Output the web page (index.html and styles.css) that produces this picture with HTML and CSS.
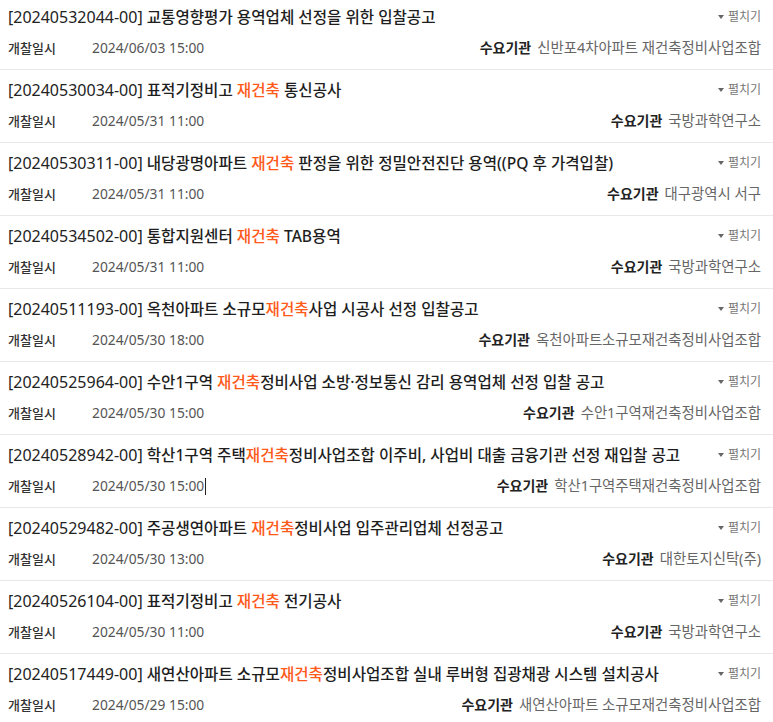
FILE: index.html
```html
<!DOCTYPE html>
<html lang="ko">
<head>
<meta charset="utf-8">
<link rel="stylesheet" href="styles.css">
</head>
<body>
<ul class="list">
  <li class="item">
    <div class="row">
      <p class="title"><span class="no">[20240532044-00]</span> 교통영향평가 용역업체 선정을 위한 입찰공고</p>
      <span class="toggle"><span class="tri"></span>펼치기</span>
    </div>
    <div class="row meta">
      <p class="date"><span class="label">개찰일시</span>2024/06/03 15:00</p>
      <p class="org"><span class="org-label">수요기관</span>신반포4차아파트 재건축정비사업조합</p>
    </div>
  </li>
  <li class="item">
    <div class="row">
      <p class="title"><span class="no">[20240530034-00]</span> 표적기정비고 <em class="hl">재건축</em> 통신공사</p>
      <span class="toggle"><span class="tri"></span>펼치기</span>
    </div>
    <div class="row meta">
      <p class="date"><span class="label">개찰일시</span>2024/05/31 11:00</p>
      <p class="org"><span class="org-label">수요기관</span>국방과학연구소</p>
    </div>
  </li>
  <li class="item">
    <div class="row">
      <p class="title"><span class="no">[20240530311-00]</span> 내당광명아파트 <em class="hl">재건축</em> 판정을 위한 정밀안전진단 용역((PQ 후 가격입찰)</p>
      <span class="toggle"><span class="tri"></span>펼치기</span>
    </div>
    <div class="row meta">
      <p class="date"><span class="label">개찰일시</span>2024/05/31 11:00</p>
      <p class="org"><span class="org-label">수요기관</span>대구광역시 서구</p>
    </div>
  </li>
  <li class="item">
    <div class="row">
      <p class="title"><span class="no">[20240534502-00]</span> 통합지원센터 <em class="hl">재건축</em> TAB용역</p>
      <span class="toggle"><span class="tri"></span>펼치기</span>
    </div>
    <div class="row meta">
      <p class="date"><span class="label">개찰일시</span>2024/05/31 11:00</p>
      <p class="org"><span class="org-label">수요기관</span>국방과학연구소</p>
    </div>
  </li>
  <li class="item">
    <div class="row">
      <p class="title"><span class="no">[20240511193-00]</span> 옥천아파트 소규모<em class="hl">재건축</em>사업 시공사 선정 입찰공고</p>
      <span class="toggle"><span class="tri"></span>펼치기</span>
    </div>
    <div class="row meta">
      <p class="date"><span class="label">개찰일시</span>2024/05/30 18:00</p>
      <p class="org"><span class="org-label">수요기관</span>옥천아파트소규모재건축정비사업조합</p>
    </div>
  </li>
  <li class="item">
    <div class="row">
      <p class="title"><span class="no">[20240525964-00]</span> 수안1구역 <em class="hl">재건축</em>정비사업 소방·정보통신 감리 용역업체 선정 입찰 공고</p>
      <span class="toggle"><span class="tri"></span>펼치기</span>
    </div>
    <div class="row meta">
      <p class="date"><span class="label">개찰일시</span>2024/05/30 15:00</p>
      <p class="org"><span class="org-label">수요기관</span>수안1구역재건축정비사업조합</p>
    </div>
  </li>
  <li class="item">
    <div class="row">
      <p class="title"><span class="no">[20240528942-00]</span> 학산1구역 주택<em class="hl">재건축</em>정비사업조합 이주비, 사업비 대출 금융기관 선정 재입찰 공고</p>
      <span class="toggle"><span class="tri"></span>펼치기</span>
    </div>
    <div class="row meta">
      <p class="date"><span class="label">개찰일시</span>2024/05/30 15:00<span class="caret"></span></p>
      <p class="org"><span class="org-label">수요기관</span>학산1구역주택재건축정비사업조합</p>
    </div>
  </li>
  <li class="item">
    <div class="row">
      <p class="title"><span class="no">[20240529482-00]</span> 주공생연아파트 <em class="hl">재건축</em>정비사업 입주관리업체 선정공고</p>
      <span class="toggle"><span class="tri"></span>펼치기</span>
    </div>
    <div class="row meta">
      <p class="date"><span class="label">개찰일시</span>2024/05/30 13:00</p>
      <p class="org"><span class="org-label">수요기관</span>대한토지신탁(주)</p>
    </div>
  </li>
  <li class="item">
    <div class="row">
      <p class="title"><span class="no">[20240526104-00]</span> 표적기정비고 <em class="hl">재건축</em> 전기공사</p>
      <span class="toggle"><span class="tri"></span>펼치기</span>
    </div>
    <div class="row meta">
      <p class="date"><span class="label">개찰일시</span>2024/05/30 11:00</p>
      <p class="org"><span class="org-label">수요기관</span>국방과학연구소</p>
    </div>
  </li>
  <li class="item">
    <div class="row">
      <p class="title"><span class="no">[20240517449-00]</span> 새연산아파트 소규모<em class="hl">재건축</em>정비사업조합 실내 루버형 집광채광 시스템 설치공사</p>
      <span class="toggle"><span class="tri"></span>펼치기</span>
    </div>
    <div class="row meta">
      <p class="date"><span class="label">개찰일시</span>2024/05/29 15:00</p>
      <p class="org"><span class="org-label">수요기관</span>새연산아파트 소규모재건축정비사업조합</p>
    </div>
  </li>
</ul>
</body>
</html>
```

FILE: styles.css
```css
* { box-sizing: border-box; }
html, body { margin: 0; padding: 0; background: #fff; }
body {
  font-family: "Noto Sans", "Noto Sans CJK KR", sans-serif;
  color: #222;
  overflow: hidden;
}
.list {
  list-style: none;
  margin: -3px 0 0 0;
  padding: 0;
}
.item {
  height: 73px;
  padding: 9px 12px 0 8px;
  border-bottom: 1px solid #e8e8e8;
}
.row {
  display: flex;
  justify-content: space-between;
  align-items: center;
  height: 22px;
}
.meta { margin-top: 9px; }
.title {
  margin: 0;
  font-size: 15.6px;
  font-weight: 500;
  line-height: 22px;
  color: #1e1e1e;
  white-space: nowrap;
}
.no {
  font-size: 16px;
  font-weight: 400;
  color: #222;
}
.hl { font-style: normal; color: #ff5a1a; }
.toggle {
  display: flex;
  align-items: center;
  font-size: 12px;
  color: #777;
  line-height: 22px;
}
.tri {
  width: 0; height: 0;
  border-left: 3.5px solid transparent;
  border-right: 3.5px solid transparent;
  border-top: 4px solid #666;
  margin-right: 4px;
}
.date {
  margin: 0;
  display: flex;
  align-items: center;
  font-size: 13.8px;
  color: #555;
  line-height: 22px;
}
.label {
  width: 84px;
  font-size: 13px;
  font-weight: 500;
  color: #333;
}
.caret {
  display: inline-block;
  width: 1px;
  height: 17px;
  background: #222;
  margin-left: 1px;
}
.org {
  margin: 0;
  font-size: 14.4px;
  line-height: 22px;
  color: #666;
  white-space: nowrap;
}
.org-label {
  font-size: 14px;
  font-weight: 700;
  color: #222;
  margin-right: 6px;
}
```
